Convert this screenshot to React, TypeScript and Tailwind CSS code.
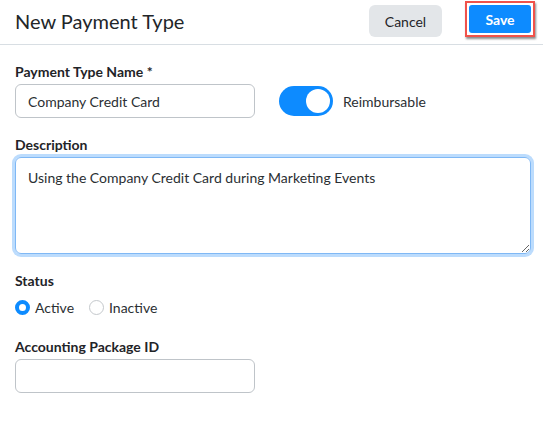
import React, { useState } from "react";

const font = { fontFamily: "Lato, 'Open Sans', sans-serif" };

const Label = ({ children }: { children: React.ReactNode }) => (
  <label className="block text-[14px] font-bold text-[#1f2428] leading-[18px] mb-[3px]">{children}</label>
);

const Radio = ({ checked, label, onClick }: { checked: boolean; label: string; onClick: () => void }) => (
  <button type="button" onClick={onClick} className="flex items-center gap-[5px] text-[14px] text-[#2b2f33]">
    <span
      className={
        checked
          ? "w-[15px] h-[15px] rounded-full border-[4px] border-[#0d8bff] bg-white"
          : "w-[15px] h-[15px] rounded-full border border-[#c4c8cc] bg-white"
      }
    />
    {label}
  </button>
);

export default function App() {
  const [reimbursable, setReimbursable] = useState(true);
  const [active, setActive] = useState(true);

  return (
    <div className="w-[543px] h-[424px] bg-white" style={font}>
      {/* Header */}
      <header className="h-[45px] flex items-start justify-between pl-[15px] pr-[8px] pt-[5px] border-b border-[#d8dee3]">
        <h1 className="text-[20px] text-[#222629] leading-[32px]">New Payment Type</h1>
        <div className="flex items-start gap-[23px]">
          <button className="h-[32px] w-[73px] rounded-[6px] bg-[#e3e6e9] text-[14px] text-[#1f2428]">Cancel</button>
          <div className="-mt-[4px] p-[2px] border-2 border-[#f0524b] shadow-[1px_2px_2px_rgba(0,0,0,0.45)]">
            <button className="h-[28px] w-[62px] rounded-[3px] bg-[#0d8bff] text-[14px] font-bold text-white">Save</button>
          </div>
        </div>
      </header>

      <main className="px-[15px] pt-[18px]">
        <Label>Payment Type Name *</Label>
        <div className="flex items-center">
          <input
            defaultValue="Company Credit Card"
            className="w-[240px] h-[34px] rounded-[6px] border border-[#bfc4c9] px-[12px] text-[14px] text-[#2b2f33] outline-none"
          />
          <button
            type="button"
            onClick={() => setReimbursable(!reimbursable)}
            className={`ml-[24px] w-[54px] h-[30px] rounded-full p-[3px] flex ${reimbursable ? "bg-[#0d8bff] justify-end" : "bg-[#c4c8cc] justify-start"}`}
          >
            <span className="w-[24px] h-[24px] rounded-full bg-white" />
          </button>
          <span className="ml-[10px] text-[14px] text-[#2b2f33]">Reimbursable</span>
        </div>

        <div className="mt-[18px]">
          <Label>Description</Label>
          <textarea
            defaultValue="Using the Company Credit Card during Marketing Events"
            className="block w-[516px] h-[97px] rounded-[6px] border border-[#7fb8f5] ring-[3px] ring-[#bcdcfd] px-[12px] py-[9px] text-[14px] text-[#2b2f33] outline-none"
          />
        </div>

        <div className="mt-[18px]">
          <Label>Status</Label>
          <div className="flex items-center gap-[15px] mt-[7px]">
            <Radio checked={active} label="Active" onClick={() => setActive(true)} />
            <Radio checked={!active} label="Inactive" onClick={() => setActive(false)} />
          </div>
        </div>

        <div className="mt-[20px]">
          <Label>Accounting Package ID</Label>
          <input className="w-[240px] h-[34px] rounded-[6px] border border-[#bfc4c9] px-[12px] text-[14px] outline-none" />
        </div>
      </main>
    </div>
  );
}
